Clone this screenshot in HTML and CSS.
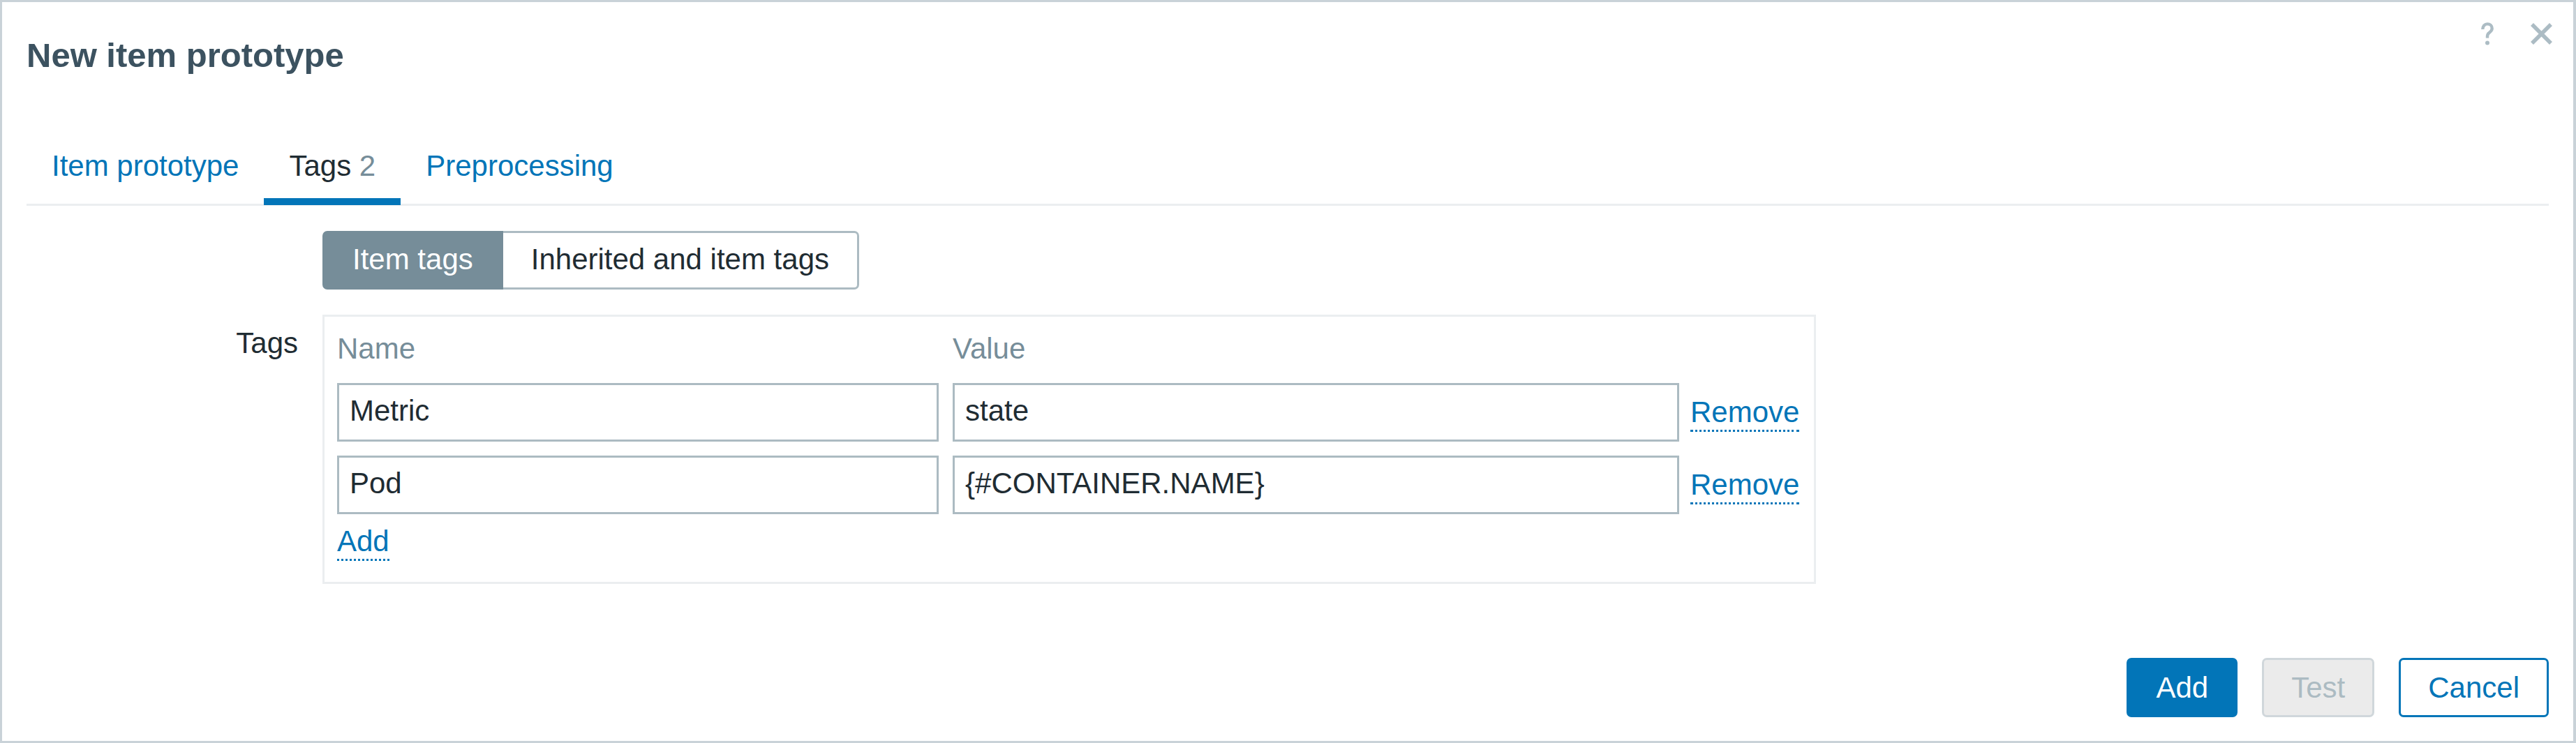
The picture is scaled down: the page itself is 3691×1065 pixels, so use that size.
FILE: index.html
```html
<!DOCTYPE html>
<html lang="en">
<head>
<meta charset="utf-8">
<title>New item prototype</title>
<link rel="stylesheet" href="styles.css">
</head>
<body>
<div class="dialog">
  <header class="dialog-head">
    <h4 class="dialog-title">New item prototype</h4>
    <div class="head-actions">
      <button class="icon-btn" type="button" title="Help">
        <svg width="18" height="33" viewBox="0 0 18 33"><path d="M2.3 10 C2.3 5.4 5.3 2.4 9 2.4 C12.8 2.4 15.7 5 15.7 8.8 C15.7 12 13.6 13.4 11.6 14.9 C9.8 16.2 9 17.5 9 20 V22.6" fill="none" stroke="#acbcc4" stroke-width="4.4"/><circle cx="9" cy="29.6" r="3" fill="#acbcc4"/></svg>
      </button>
      <button class="icon-btn" type="button" title="Close">
        <svg width="33" height="33" viewBox="0 0 33 33"><path d="M3 3 L30 30 M30 3 L3 30" stroke="#acbcc4" stroke-width="5.6" fill="none"/></svg>
      </button>
    </div>
  </header>

  <ul class="tabs">
    <li><a class="tab" href="#">Item prototype</a></li>
    <li><a class="tab active" href="#">Tags <span class="count">2</span></a></li>
    <li><a class="tab" href="#">Preprocessing</a></li>
  </ul>

  <form class="form-grid">
    <div class="form-label"></div>
    <div class="seg">
      <span class="seg-opt checked">Item tags</span>
      <span class="seg-opt">Inherited and item tags</span>
    </div>

    <label class="form-label">Tags</label>
    <div class="tags-box">
      <div class="tag-grid">
        <div class="col-head">Name</div>
        <div class="col-head">Value</div>
        <div class="col-head"></div>

        <input class="text-input" type="text" value="Metric">
        <input class="text-input" type="text" value="state">
        <div class="remove-cell"><a class="link" href="#">Remove</a></div>

        <input class="text-input" type="text" value="Pod">
        <input class="text-input" type="text" value="{#CONTAINER.NAME}">
        <div class="remove-cell"><a class="link" href="#">Remove</a></div>

        <div class="add-row"><a class="link" href="#">Add</a></div>
      </div>
    </div>
  </form>

  <footer class="dialog-foot">
    <button class="btn btn-primary" type="button">Add</button>
    <button class="btn btn-disabled" type="button" disabled>Test</button>
    <button class="btn btn-alt" type="button">Cancel</button>
  </footer>
</div>
</body>
</html>
```

FILE: styles.css
```css
html, body {
  margin: 0;
  padding: 0;
  background: #ffffff;
}

body {
  font-family: "Liberation Sans", Arial, sans-serif;
  font-size: 42px;
  color: #1f2c33;
}

.dialog {
  box-sizing: border-box;
  width: 100vw;
  height: 100vh;
  border: 3px solid #c9d2d8;
  border-right-width: 4px;
  padding: 0 35px 34px;
  display: flex;
  flex-direction: column;
  background: #ffffff;
}

/* header */
.dialog-head {
  display: flex;
  align-items: flex-start;
}

.dialog-title {
  flex: 1;
  margin: 0;
  padding-top: 48px;
  font-size: 49px;
  line-height: 56px;
  font-weight: 700;
  color: #3c5260;
}

.head-actions {
  display: flex;
  gap: 52px;
  margin-top: 29px;
  margin-right: -6px;
}

.icon-btn {
  border: 0;
  background: none;
  padding: 0;
  margin: 0;
  display: block;
  line-height: 0;
  cursor: pointer;
}

/* tabs */
.tabs {
  list-style: none;
  margin: 86px 0 0;
  padding: 0;
  display: flex;
  border-bottom: 3px solid #ebeef0;
}

.tab {
  display: block;
  position: relative;
  padding: 21px 36px 30px;
  font-size: 42px;
  line-height: 48px;
  color: #0275b8;
  text-decoration: none;
}

.tab.active {
  color: #1f2c33;
}

.tab.active::after {
  content: "";
  position: absolute;
  left: 0;
  right: 0;
  bottom: -2px;
  height: 10px;
  background: #0275b8;
}

.count {
  color: #768d99;
}

/* form */
.form-grid {
  display: grid;
  grid-template-columns: 389px auto;
  column-gap: 35px;
  row-gap: 36px;
  margin-top: 36px;
  align-items: start;
  justify-content: start;
}

.form-label {
  text-align: right;
  padding-top: 17px;
  font-size: 42px;
  line-height: 48px;
  color: #1f2c33;
}

.seg {
  display: flex;
  justify-self: start;
}

.seg-opt {
  border: 3px solid #acbbc2;
  border-left-width: 0;
  padding: 0 40px 3px;
  line-height: 75px;
  font-size: 42px;
  color: #1f2c33;
  background: #ffffff;
  white-space: nowrap;
  cursor: pointer;
}

.seg-opt:first-child {
  border-left-width: 3px;
  border-radius: 7px 0 0 7px;
}

.seg-opt:last-child {
  border-radius: 0 7px 7px 0;
}

.seg-opt.checked {
  background: #768d99;
  border-color: #768d99;
  color: #ffffff;
}

.tags-box {
  box-sizing: border-box;
  width: 2140px;
  border: 3px solid #ebeef0;
  padding: 22px 0 34px 18px;
}

.tag-grid {
  display: grid;
  grid-template-columns: 862px 1041px auto;
  column-gap: 20px;
  row-gap: 20px;
  justify-content: start;
}

.col-head {
  color: #768d99;
  font-size: 42px;
  line-height: 48px;
  margin-bottom: 5px;
}

.text-input {
  box-sizing: border-box;
  width: 100%;
  height: 84px;
  margin: 0;
  border: 3px solid #acbbc2;
  border-radius: 0;
  padding: 0 15px 5px;
  font-family: "Liberation Sans", Arial, sans-serif;
  font-size: 42px;
  color: #1f2c33;
  background: #ffffff;
  outline: none;
}

.remove-cell {
  line-height: 84px;
  margin-left: -4px;
  white-space: nowrap;
}

.add-row {
  grid-column: 1 / -1;
  margin-top: -5px;
  line-height: 48px;
}

.link {
  color: #0275b8;
  text-decoration: none;
  border-bottom: 3px dotted #0275b8;
  padding-bottom: 2px;
}

/* footer */
.dialog-foot {
  margin-top: auto;
  display: flex;
  justify-content: flex-end;
  gap: 35px;
}

.btn {
  box-sizing: border-box;
  height: 85px;
  margin: 0;
  padding: 0 39px;
  border: 3px solid;
  border-radius: 7px;
  font-family: "Liberation Sans", Arial, sans-serif;
  font-size: 42px;
  cursor: pointer;
}

.btn-primary {
  background: #0275b8;
  border-color: #0275b8;
  color: #ffffff;
}

.btn-disabled {
  background: #ebebeb;
  border-color: #d0d7db;
  color: #acbbc2;
  cursor: default;
}

.btn-alt {
  background: #ffffff;
  border-color: #0275b8;
  color: #0275b8;
}
```
